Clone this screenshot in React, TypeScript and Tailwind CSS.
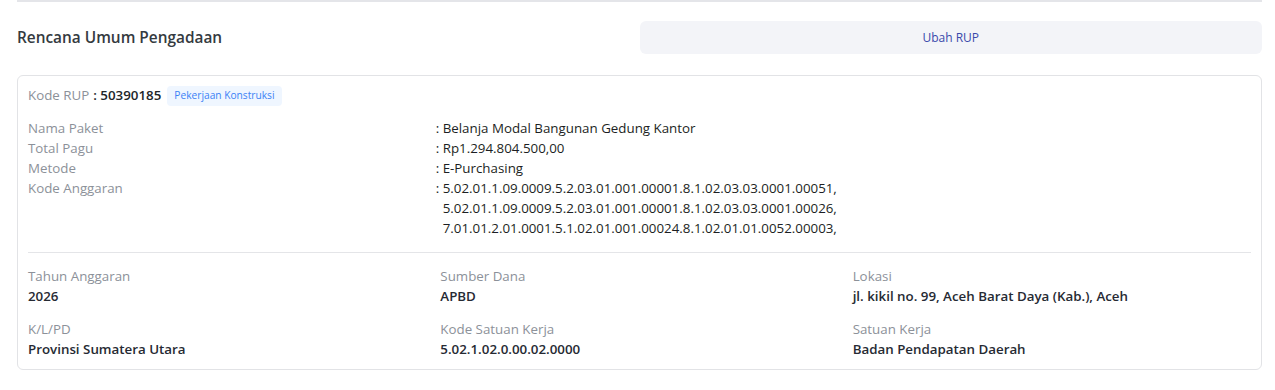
import React from "react";

export default function App() {
  const details: [string, string[]][] = [
    ["Nama Paket", ["Belanja Modal Bangunan Gedung Kantor"]],
    ["Total Pagu", ["Rp1.294.804.500,00"]],
    ["Metode", ["E-Purchasing"]],
    [
      "Kode Anggaran",
      [
        "5.02.01.1.09.0009.5.2.03.01.001.00001.8.1.02.03.03.0001.00051,",
        "5.02.01.1.09.0009.5.2.03.01.001.00001.8.1.02.03.03.0001.00026,",
        "7.01.01.2.01.0001.5.1.02.01.001.00024.8.1.02.01.01.0052.00003,",
      ],
    ],
  ];
  const bottom: [string, string][] = [
    ["Tahun Anggaran", "2026"],
    ["Sumber Dana", "APBD"],
    ["Lokasi", "jl. kikil no. 99, Aceh Barat Daya (Kab.), Aceh"],
    ["K/L/PD", "Provinsi Sumatera Utara"],
    ["Kode Satuan Kerja", "5.02.1.02.0.00.02.0000"],
    ["Satuan Kerja", "Badan Pendapatan Daerah"],
  ];
  return (
    <div className="w-[1275px] h-[390px] bg-white pl-[17px] pr-[13px] font-['Open_Sans','Noto_Sans',sans-serif]">
      <div className="border-t-2 border-[#e4e5e9]">
        <div className="grid grid-cols-2 items-center pt-[19px] pb-[21px]">
          <div className="text-[15.4px] font-semibold text-[#343a40] leading-[20px]">
            Rencana Umum Pengadaan
          </div>
          <button className="h-[33px] w-full rounded-[6px] bg-[#f3f4f8] text-[12px] font-medium text-[#3949ab]">
            Ubah RUP
          </button>
        </div>
        <div className="rounded-[6px] border border-[#e2e3e6] p-[10px]">
          <div className="flex items-center h-[20px] text-[13.33px]">
            <span className="text-[#8c9199]">Kode RUP</span>
            <span className="font-semibold text-[#212529] ml-[4px]">: 50390185</span>
            <span className="ml-[6px] h-[20px] flex items-center rounded-[4px] bg-[#eff6ff] px-[7px] text-[10.2px] font-medium text-[#3b82f6]">
              Pekerjaan Konstruksi
            </span>
          </div>
          <div className="mt-[12px] text-[13.33px] leading-[20px]">
            {details.map(([label, vals]) => (
              <div key={label} className="grid grid-cols-3">
                <div className="text-[#8c9199]">{label}</div>
                <div className="col-span-2 flex text-[#1c1f23]">
                  <span className="w-[7px] shrink-0">:</span>
                  <div>
                    {vals.map((v) => (
                      <div key={v}>{v}</div>
                    ))}
                  </div>
                </div>
              </div>
            ))}
          </div>
          <div className="mt-[14px] h-px bg-[#e4e5e8]" />
          <div className="mt-[13px] grid grid-cols-3 gap-x-[14px] gap-y-[13px] text-[13.33px] leading-[20px]">
            {bottom.map(([l, v]) => (
              <div key={l}>
                <div className="text-[#8c9199]">{l}</div>
                <div className="font-semibold text-[#262a33]">{v}</div>
              </div>
            ))}
          </div>
        </div>
      </div>
    </div>
  );
}
